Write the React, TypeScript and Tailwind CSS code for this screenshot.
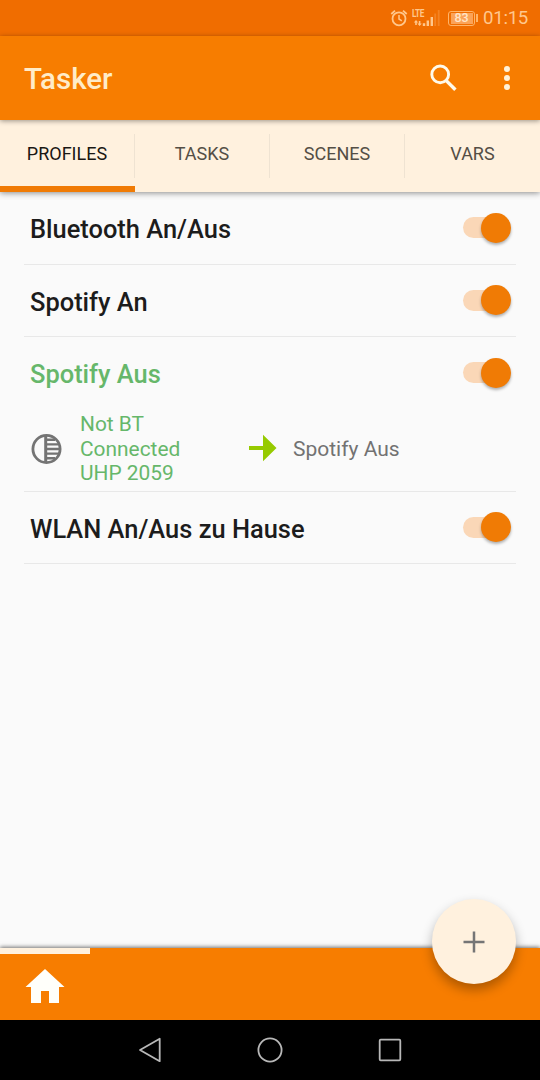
import { useState } from "react";
import clsx from "clsx";

const TABS = ["PROFILES", "TASKS", "SCENES", "VARS"];

type Profile = {
  name: string;
  active?: boolean;
  context?: string[];
  task?: string;
};

const PROFILES: Profile[] = [
  { name: "Bluetooth An/Aus" },
  { name: "Spotify An" },
  {
    name: "Spotify Aus",
    active: true,
    context: ["Not BT", "Connected", "UHP 2059"],
    task: "Spotify Aus",
  },
  { name: "WLAN An/Aus zu Hause" },
];

function StatusBar() {
  return (
    <div className="flex h-9 shrink-0 items-center bg-[#f06d00] pl-[390px] text-[#ffc78c]">
      <svg width="18" height="18" viewBox="0 0 18 18" fill="none" stroke="currentColor">
        <circle cx="9" cy="9.8" r="6.5" strokeWidth="1.8" />
        <path d="M9 6v4l2.8 1.8" strokeWidth="1.5" />
        <path d="M1.3 5 5 1.6M16.7 5 13 1.6" strokeWidth="1.8" />
      </svg>
      <div className="ml-1 flex h-[18px] w-7 flex-col">
        <span className="h-2 w-4 origin-left scale-x-75 text-[11px] leading-[9px] font-bold tracking-[-0.6px]">
          LTE
        </span>
        <svg className="-mt-2" width="28" height="18" viewBox="0 0 28 18" fill="currentColor">
          <path d="M4 11 6.2 13.4H4.8V16H3.2v-2.6H1.8zM7.6 17 5.4 14.6h1.4V12h1.6v2.6H9.8z" />
          <path d="M10.8 14.2h2.4V17h-2.4zM14.6 11.5H17V17h-2.4zM18.6 8H21v9h-2.4z" />
          <path d="M22.3 4.5h1.8V17h-1.8zM25.8 1h1.8v16h-1.8z" opacity=".25" />
        </svg>
      </div>
      <div className="ml-2 flex h-[15px] w-[27px] items-center justify-center rounded-[3px] border border-[#ffb469] p-px">
        <div className="flex h-[11px] w-[22px] items-center justify-center bg-[#fba358] text-[12.5px] leading-none font-medium text-[#ffe5c8]">
          83
        </div>
      </div>
      <div className="ml-px h-2 w-[2px] bg-[#ffb469]" />
      <span className="ml-[5px] pt-px text-[18.7px] leading-none tracking-[-0.3px]">01:15</span>
    </div>
  );
}

function AppBar() {
  return (
    <header className="relative z-20 flex h-[84px] shrink-0 items-center bg-[#f77d00] pr-[30px] pl-6 shadow-[0_1px_5px_rgba(0,0,0,0.4)]">
      <h1 className="flex-1 pt-0.5 text-[29.5px] font-medium text-[#ffecc8]">Tasker</h1>
      <button className="mr-[42px] p-1">
        <svg width="30" height="30" viewBox="0 0 30 30" fill="none" stroke="#fffaea">
          <circle cx="12.2" cy="11.4" r="8.4" strokeWidth="2.9" />
          <path d="m18 17.4 9.4 9.4" strokeWidth="3.4" />
        </svg>
      </button>
      <button className="flex flex-col gap-[3px]">
        <i className="h-1.5 w-1.5 rounded-full bg-[#fff3d9]" />
        <i className="h-1.5 w-1.5 rounded-full bg-[#fff3d9]" />
        <i className="h-1.5 w-1.5 rounded-full bg-[#fff3d9]" />
      </button>
    </header>
  );
}

function Switch({ on, onClick }: { on: boolean; onClick: () => void }) {
  return (
    <button
      role="switch"
      aria-checked={on}
      onClick={onClick}
      className={clsx(
        "flex h-[21px] w-12 items-center rounded-full",
        on ? "justify-end bg-[#fad7b7]" : "bg-gray-300",
      )}
    >
      <span
        className={clsx(
          "h-[30px] w-[30px] rounded-full shadow-[0_2px_3px_rgba(0,0,0,0.3)]",
          on ? "bg-[#f07b05]" : "bg-gray-50",
        )}
      />
    </button>
  );
}

function ProfileRow({ profile }: { profile: Profile }) {
  const [on, setOn] = useState(true);

  return (
    <li className="border-b border-[#e8e8e8]">
      <div className="flex h-[71.5px] items-center justify-between pr-[5px] pl-1.5">
        <span
          className={clsx(
            "pt-[3px] text-[25.45px] font-medium",
            profile.active ? "text-[#66b76a]" : "text-[#1c1c1c]",
          )}
        >
          {profile.name}
        </span>
        <Switch on={on} onClick={() => setOn(!on)} />
      </div>
      {profile.context && (
        <div className="flex h-[82px] items-center pb-px pl-1.5">
          <svg width="33" height="32" viewBox="0 0 33 32" fill="none" stroke="#747474">
            <circle cx="16.5" cy="16" r="13.6" strokeWidth="2.8" />
            <path d="M15.7 3v26" strokeWidth="3" />
            <path d="M17 6.8h8M17 11.4h11.5M17 16h12.5M17 20.6h11.5M17 25.2h8" strokeWidth="2.4" />
          </svg>
          <div className="ml-[17px] w-[169px] text-[20.9px] leading-[24.5px] text-[#66b76a]">
            {profile.context.map((line) => (
              <div key={line}>{line}</div>
            ))}
          </div>
          <svg className="-mt-0.5" width="28" height="28" viewBox="0 0 28 28" fill="#96ca00">
            <path d="M0 12h14V.8L27.5 14 14 27.2V16H0z" />
          </svg>
          <span className="ml-4 pt-px text-[21px] text-[#727272]">{profile.task}</span>
        </div>
      )}
    </li>
  );
}

function NavBar() {
  return (
    <nav className="flex h-[60px] shrink-0 items-center justify-between bg-black px-[135px]">
      <svg width="30" height="30" viewBox="0 0 30 30" fill="none" stroke="#b8b8b8" strokeWidth="1.8" strokeLinejoin="round">
        <path d="M24.7 3.8v22.4L5 15z" />
      </svg>
      <svg width="30" height="30" viewBox="0 0 30 30" fill="none" stroke="#b8b8b8" strokeWidth="1.8">
        <circle cx="15" cy="15" r="11.6" />
      </svg>
      <svg width="30" height="30" viewBox="0 0 30 30" fill="none" stroke="#b8b8b8" strokeWidth="1.8">
        <rect x="4.7" y="4.7" width="20.6" height="20.6" rx="1" />
      </svg>
    </nav>
  );
}

export default function App() {
  const [tab, setTab] = useState("PROFILES");

  return (
    <div className="flex h-[1080px] w-[540px] flex-col overflow-hidden bg-[#fafafa] font-['Roboto',sans-serif]">
      <StatusBar />
      <AppBar />

      <div className="relative z-10 grid h-[72px] shrink-0 grid-cols-4 bg-[#fff1de] shadow-[0_1px_6px_rgba(0,0,0,0.45)]">
        {TABS.map((name, i) => (
          <button
            key={name}
            onClick={() => setTab(name)}
            className={clsx(
              "flex flex-col text-[18px]",
              tab === name ? "text-[#1a1713]" : "text-[#544e45]",
            )}
          >
            <span
              className={clsx(
                "mt-3.5 flex h-11 w-full items-center justify-center pb-1.5",
                i < 3 && "border-r border-[#efe3d2]",
              )}
            >
              {name}
            </span>
            {tab === name && <span className="mt-auto h-1.5 w-full bg-[#f07b05]" />}
          </button>
        ))}
      </div>

      <ul className="flex-1 px-6">
        {PROFILES.map((profile) => (
          <ProfileRow key={profile.name} profile={profile} />
        ))}
      </ul>

      <footer className="relative h-[72px] shrink-0 bg-[#f77d00] shadow-[0_-1px_4px_rgba(0,0,0,0.55)]">
        <div className="h-1.5 w-[90px] bg-[#fff1de]" />
        <svg className="mt-[15px] ml-[25px]" width="40" height="35" viewBox="0 0 40 35" fill="#fffffa">
          <path d="M20 0 39.5 18H34v16H24V22h-8v12H6V18H.5z" />
        </svg>
        {/* add button sits half over the list */}
        <button className="absolute -top-[49px] right-6 flex h-[85px] w-[84px] items-center justify-center rounded-full bg-[#fff1de] shadow-[0_6px_12px_rgba(0,0,0,0.3)]">
          <svg width="22" height="22" viewBox="0 0 22 22" stroke="#757575" strokeWidth="2.5">
            <path d="M11 .5v21M.5 11h21" />
          </svg>
        </button>
      </footer>
      <NavBar />
    </div>
  );
}
